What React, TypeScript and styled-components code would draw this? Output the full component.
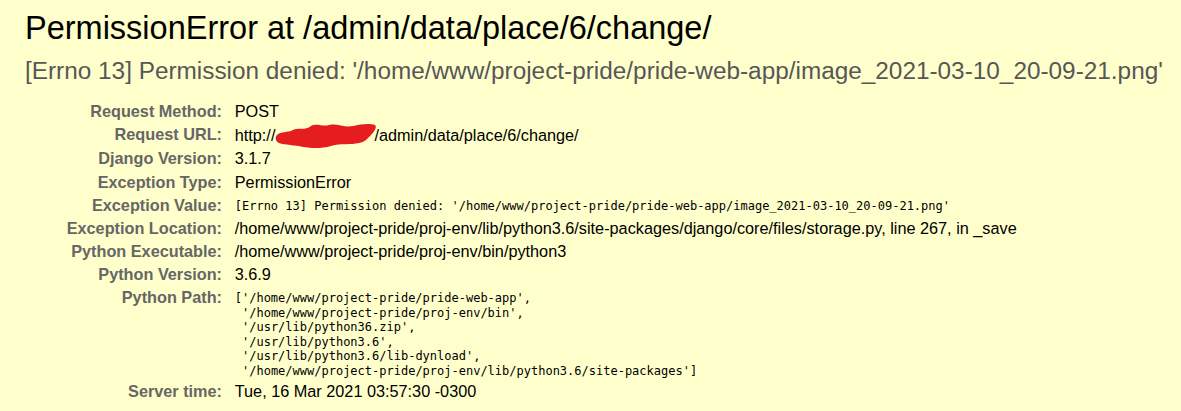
import React from "react";
import styled, { createGlobalStyle } from "styled-components";

const GlobalStyle = createGlobalStyle`
  html, body { margin: 0; padding: 0; }
  body {
    background: #ffffcc;
    color: #000;
    font-family: "Liberation Sans", Arial, sans-serif;
  }
`;

const Summary = styled.div`
  background: #ffffcc;
  padding: 10px 25px 12px 25px;
`;

const Title = styled.h1`
  margin: 0;
  font-size: 32.5px;
  font-weight: normal;
  line-height: 37px;
`;

const ExceptionValue = styled.pre`
  margin: 10px 0 15px 0;
  font-family: "Liberation Sans", Arial, sans-serif;
  font-size: 24.35px;
  line-height: 28px;
  color: #575757;
  white-space: nowrap;
`;

const MetaTable = styled.table`
  border: none;
  border-collapse: collapse;
  width: 100%;
`;

const Th = styled.th`
  width: 195px;
  text-align: right;
  vertical-align: top;
  color: #666;
  font-weight: bold;
  font-size: 16.25px;
  line-height: 19.1px;
  padding: 2px 9px 2px 2px;
`;

const Td = styled.td`
  vertical-align: top;
  font-size: 16.25px;
  line-height: 19.1px;
  padding: 2px 3.75px;
`;

const Code = styled.pre`
  margin: 0;
  padding-top: 3px;
  font-family: "DejaVu Sans Mono", "Liberation Mono", monospace;
  font-size: 12px;
  line-height: 14.55px;
  white-space: pre-wrap;
`;

const Redacted = styled.span`
  position: relative;
  display: inline-block;
  width: 99px;
  height: 1em;
  vertical-align: baseline;
`;

const Scribble = styled.svg`
  position: absolute;
  left: 0;
  top: -2px;
  width: 102px;
  height: 26px;
  overflow: visible;
`;

const rows: { label: string; value: React.ReactNode }[] = [
  { label: "Request Method:", value: "POST" },
  {
    label: "Request URL:",
    value: (
      <>
        http://
        <Redacted>
          <Scribble viewBox="0 0 102 26">
            <path
              d="M2 12 C 6 8, 12 10, 18 7 C 24 4, 30 8, 36 3 C 42 0, 48 4, 54 2 C 62 0, 70 5, 78 3 C 86 1, 94 0, 100 2 C 102 4, 100 8, 96 12 C 92 16, 90 19, 84 20 C 76 22, 66 20, 56 23 C 46 26, 36 25, 28 24 C 20 22, 10 22, 4 20 C 0 18, 0 14, 2 12 Z"
              fill="#e51d1f"
            />
          </Scribble>
        </Redacted>
        /admin/data/place/6/change/
      </>
    ),
  },
  { label: "Django Version:", value: "3.1.7" },
  { label: "Exception Type:", value: "PermissionError" },
  {
    label: "Exception Value:",
    value: (
      <Code>
        [Errno 13] Permission denied: '/home/www/project-pride/pride-web-app/image_2021-03-10_20-09-21.png'
      </Code>
    ),
  },
  {
    label: "Exception Location:",
    value:
      "/home/www/project-pride/proj-env/lib/python3.6/site-packages/django/core/files/storage.py, line 267, in _save",
  },
  { label: "Python Executable:", value: "/home/www/project-pride/proj-env/bin/python3" },
  { label: "Python Version:", value: "3.6.9" },
  {
    label: "Python Path:",
    value: (
      <Code>
        {`['/home/www/project-pride/pride-web-app',
 '/home/www/project-pride/proj-env/bin',
 '/usr/lib/python36.zip',
 '/usr/lib/python3.6',
 '/usr/lib/python3.6/lib-dynload',
 '/home/www/project-pride/proj-env/lib/python3.6/site-packages']`}
      </Code>
    ),
  },
  { label: "Server time:", value: "Tue, 16 Mar 2021 03:57:30 -0300" },
];

export default function App() {
  return (
    <>
      <GlobalStyle />
      <Summary>
        <Title>PermissionError at /admin/data/place/6/change/</Title>
        <ExceptionValue>
          [Errno 13] Permission denied: '/home/www/project-pride/pride-web-app/image_2021-03-10_20-09-21.png'
        </ExceptionValue>
        <MetaTable>
          <tbody>
            {rows.map((r) => (
              <tr key={r.label}>
                <Th>{r.label}</Th>
                <Td>{r.value}</Td>
              </tr>
            ))}
          </tbody>
        </MetaTable>
      </Summary>
    </>
  );
}
